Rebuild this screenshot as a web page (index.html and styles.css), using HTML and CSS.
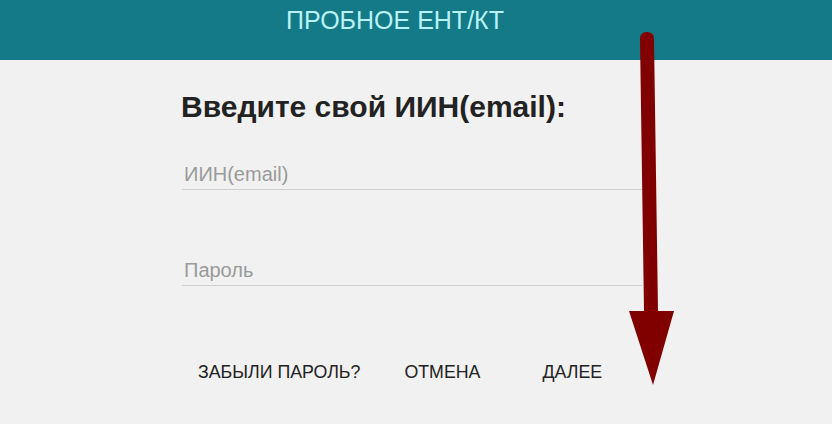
FILE: index.html
```html
<!DOCTYPE html>
<html lang="ru">
<head>
<meta charset="utf-8">
<title>Пробное ЕНТ/КТ</title>
<link rel="stylesheet" href="styles.css">
</head>
<body>
<header class="topbar">
  <div class="topbar-title">ПРОБНОЕ ЕНТ/КТ</div>
</header>
<main class="login">
  <h1 class="login-title">Введите свой ИИН(email):</h1>
  <div class="field"><input class="field-input" type="text" placeholder="ИИН(email)"></div>
  <div class="field"><input class="field-input" type="password" placeholder="Пароль"></div>
  <div class="actions">
    <button class="btn btn-forgot">ЗАБЫЛИ ПАРОЛЬ?</button>
    <button class="btn btn-cancel">ОТМЕНА</button>
    <button class="btn btn-next">ДАЛЕЕ</button>
  </div>
</main>
<svg class="pointer" width="832" height="424" viewBox="0 0 832 424">
  <path d="M640 39 Q640 32 647 32 Q654 32 654 39 L658 311 L674 311 L653 385 L629 311 L644 311 Z" fill="#800000"/>
</svg>
</body>
</html>
```

FILE: styles.css
```css
* { box-sizing: border-box; }
html, body { margin: 0; padding: 0; }
body {
  width: 832px;
  height: 424px;
  overflow: hidden;
  background: #f1f1f1;
  font-family: "Liberation Sans", Arial, sans-serif;
  position: relative;
}
.topbar {
  height: 60px;
  background: #157a87;
  display: flex;
  justify-content: center;
  padding-top: 5px;
}
.topbar-title {
  color: #b8f2f6;
  font-size: 25px;
  line-height: 30px;
  padding-right: 42px;
}
.login {
  padding: 30px 0 0 182px;
  width: 660px;
}
.login-title {
  margin: 0 0 0 -1px;
  font-size: 30px;
  line-height: 34px;
  font-weight: bold;
  color: #222;
}
.field {
  margin-top: 28px;
  width: 460px;
}
.field + .field { margin-top: 58px; }
.field-input {
  display: block;
  width: 100%;
  height: 38px;
  border: 0;
  border-bottom: 1px solid #cfcfcf;
  background: transparent;
  font-family: "Liberation Sans", Arial, sans-serif;
  font-size: 20px;
  color: #222;
  padding: 8px 2px 0;
  outline: none;
}
.field-input::placeholder { color: #9a9a9a; }
.actions {
  display: flex;
  margin-top: 76px;
  padding-left: 16px;
}
.btn {
  border: 0;
  background: transparent;
  font-family: "Liberation Sans", Arial, sans-serif;
  font-size: 17.8px;
  color: #222;
  padding: 0;
  line-height: 20px;
}
.btn-cancel { margin-left: 44px; }
.btn-next { margin-left: 62px; }
.pointer {
  position: absolute;
  left: 0;
  top: 0;
  pointer-events: none;
}
```
